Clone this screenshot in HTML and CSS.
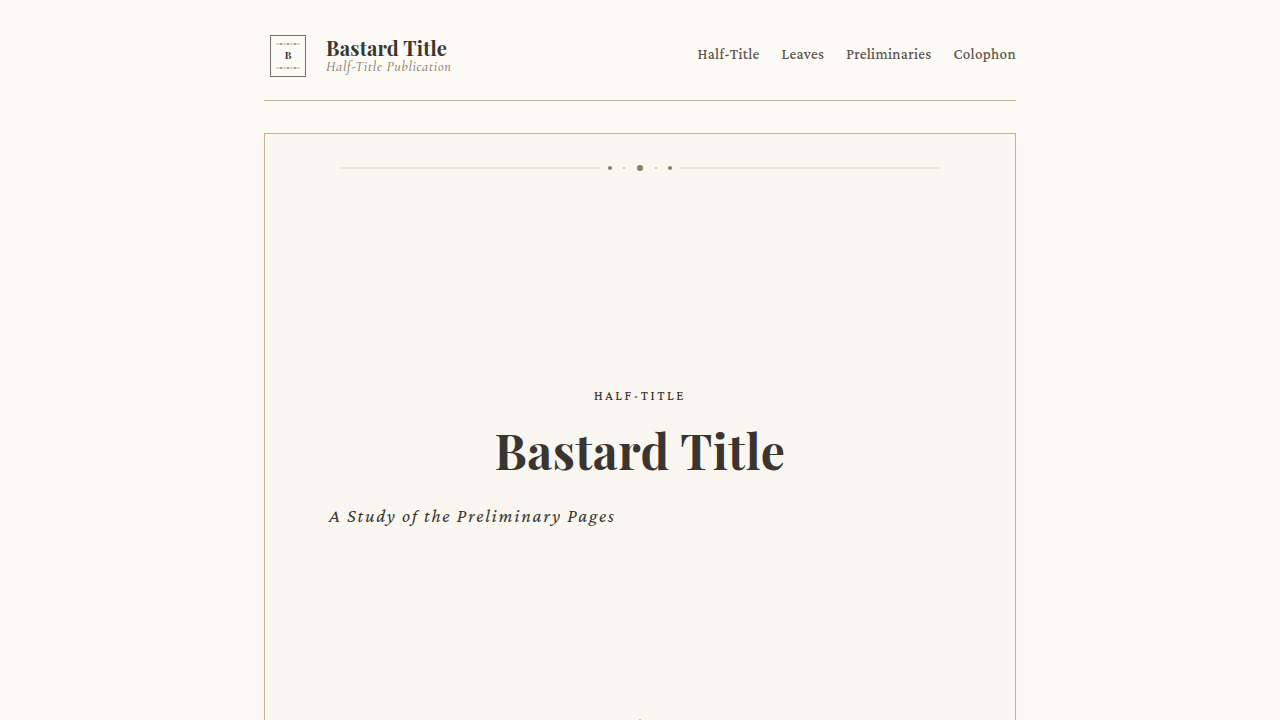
FILE: index.html
```
<!DOCTYPE html>
<html lang="en">
<head>
    <meta charset="UTF-8">
    <meta name="viewport" content="width=device-width, initial-scale=1.0">
    <title>Bastard Title</title>
    <link rel="stylesheet" href="styles.css">
</head>
<body>
    <div class="wrapper">
        <header class="header">
            <a class="brand" href="#">
                <svg class="logo" width="48" height="48" viewBox="0 0 48 48" aria-hidden="true">
                    <rect x="6.5" y="3.5" width="35" height="41" fill="none" stroke="#3a3530" stroke-width="1" opacity="0.7"/>
                    <path d="M12 12h24M12 36h24" stroke="#c4b590" stroke-width="2" opacity="0.5"/>
                    <g fill="#8b7d62" opacity="0.6">
                        <path d="M16 11h2v2h-2zM23 11h2v2h-2zM30 11h2v2h-2z"/>
                        <path d="M16 35h2v2h-2zM23 35h2v2h-2zM30 35h2v2h-2z"/>
                    </g>
                    <text class="logoLetter" x="24" y="27" text-anchor="middle">B</text>
                </svg>
                <span class="brandText">
                    <span class="brandName">Bastard Title</span>
                    <span class="brandSub">Half-Title Publication</span>
                </span>
            </a>
            <nav class="nav">
                <a href="#half-title">Half-Title</a>
                <a href="#leaves">Leaves</a>
                <a href="#preliminaries">Preliminaries</a>
                <a href="#colophon">Colophon</a>
            </nav>
        </header>

        <main class="leaf" id="half-title">
            <svg class="ornament" width="600" height="12" viewBox="0 0 600 12" aria-hidden="true">
                <path d="M0 6h260M340 6h260" stroke="#ebe5d8" stroke-width="2"/>
                <g fill="#8b7d62">
                    <circle cx="270" cy="6" r="2"/>
                    <circle cx="300" cy="6" r="3"/>
                    <circle cx="330" cy="6" r="2"/>
                </g>
                <g fill="#c4b590">
                    <circle cx="284" cy="6" r="1"/>
                    <circle cx="316" cy="6" r="1"/>
                </g>
            </svg>
            <div class="titleBlock">
                <p class="label">Half-Title</p>
                <h1 class="title">Bastard Title</h1>
                <p class="subtitle">A Study of the Preliminary Pages</p>
            </div>
            <svg class="ornament" width="40" height="40" viewBox="0 0 40 40" aria-hidden="true">
                <path d="M20 0l6 20-6 20-6-20z" fill="none" stroke="#c4b590"/>
            </svg>
        </main>
    </div>
</body>
</html>
```

FILE: styles.css
```
*{
    box-sizing: border-box;
    margin: 0px;
    padding: 0px;
}
body{
    background: #fdfbf6;
    color: #3a3530;
    font-family: "Crimson Pro", "Crimson Text", "Liberation Serif", serif;
}
a{
    color: inherit;
    text-decoration: none;
}
.wrapper{
    max-width: 800px;
    margin: 0 auto;
    padding: 32px 24px;
}
.header{
    display: flex;
    justify-content: space-between;
    align-items: flex-start;
    padding-bottom: 20px;
    border-bottom: 1px solid #c4b590;
    margin-bottom: 32px;
}
.brand{
    display: flex;
    align-items: center;
    gap: 14px;
}
.logo{
    display: block;
}
.logoLetter{
    font: 700 10px "Playfair Display", "Liberation Serif", serif;
    fill: #3a3530;
}
.brandText{
    display: flex;
    flex-direction: column;
    padding-top: 2px;
}
.brandName{
    font: 700 20px/20px "Playfair Display", "Liberation Serif", serif;
    letter-spacing: 0.2px;
}
.brandSub{
    font: italic 500 14px/18px "Cormorant Garamond", "Liberation Serif", serif;
    letter-spacing: 0.7px;
    color: #8b7d6b;
}
.nav{
    display: flex;
    flex-wrap: wrap;
    gap: 22px;
    padding-top: 12px;
    font-size: 15px;
    font-weight: 500;
    line-height: 20px;
    letter-spacing: 0.3px;
    color: #5c554c;
}
.leaf{
    display: flex;
    flex-direction: column;
    align-items: center;
    min-height: 655px;
    padding: 28px 64px;
    background: #faf7f0;
    border: 1px solid #c4b590;
    box-shadow: 0 8px 32px rgba(58, 53, 48, 0.04);
}
.ornament{
    display: block;
    max-width: 100%;
    flex-shrink: 0;
}
.titleBlock{
    flex: 1;
    display: flex;
    flex-direction: column;
    justify-content: center;
    width: 100%;
    padding-top: 24px;
}
.label{
    font-size: 13px;
    font-weight: 500;
    line-height: 20px;
    letter-spacing: 2.6px;
    text-align: center;
    text-transform: uppercase;
}
.title{
    margin: 14px 0 20px;
    font: 700 48px/60px "Playfair Display", "Liberation Serif", serif;
    letter-spacing: 0.5px;
    text-align: center;
}
.subtitle{
    font-size: 19px;
    line-height: 32px;
    font-style: italic;
    letter-spacing: 1.8px;
}
```
